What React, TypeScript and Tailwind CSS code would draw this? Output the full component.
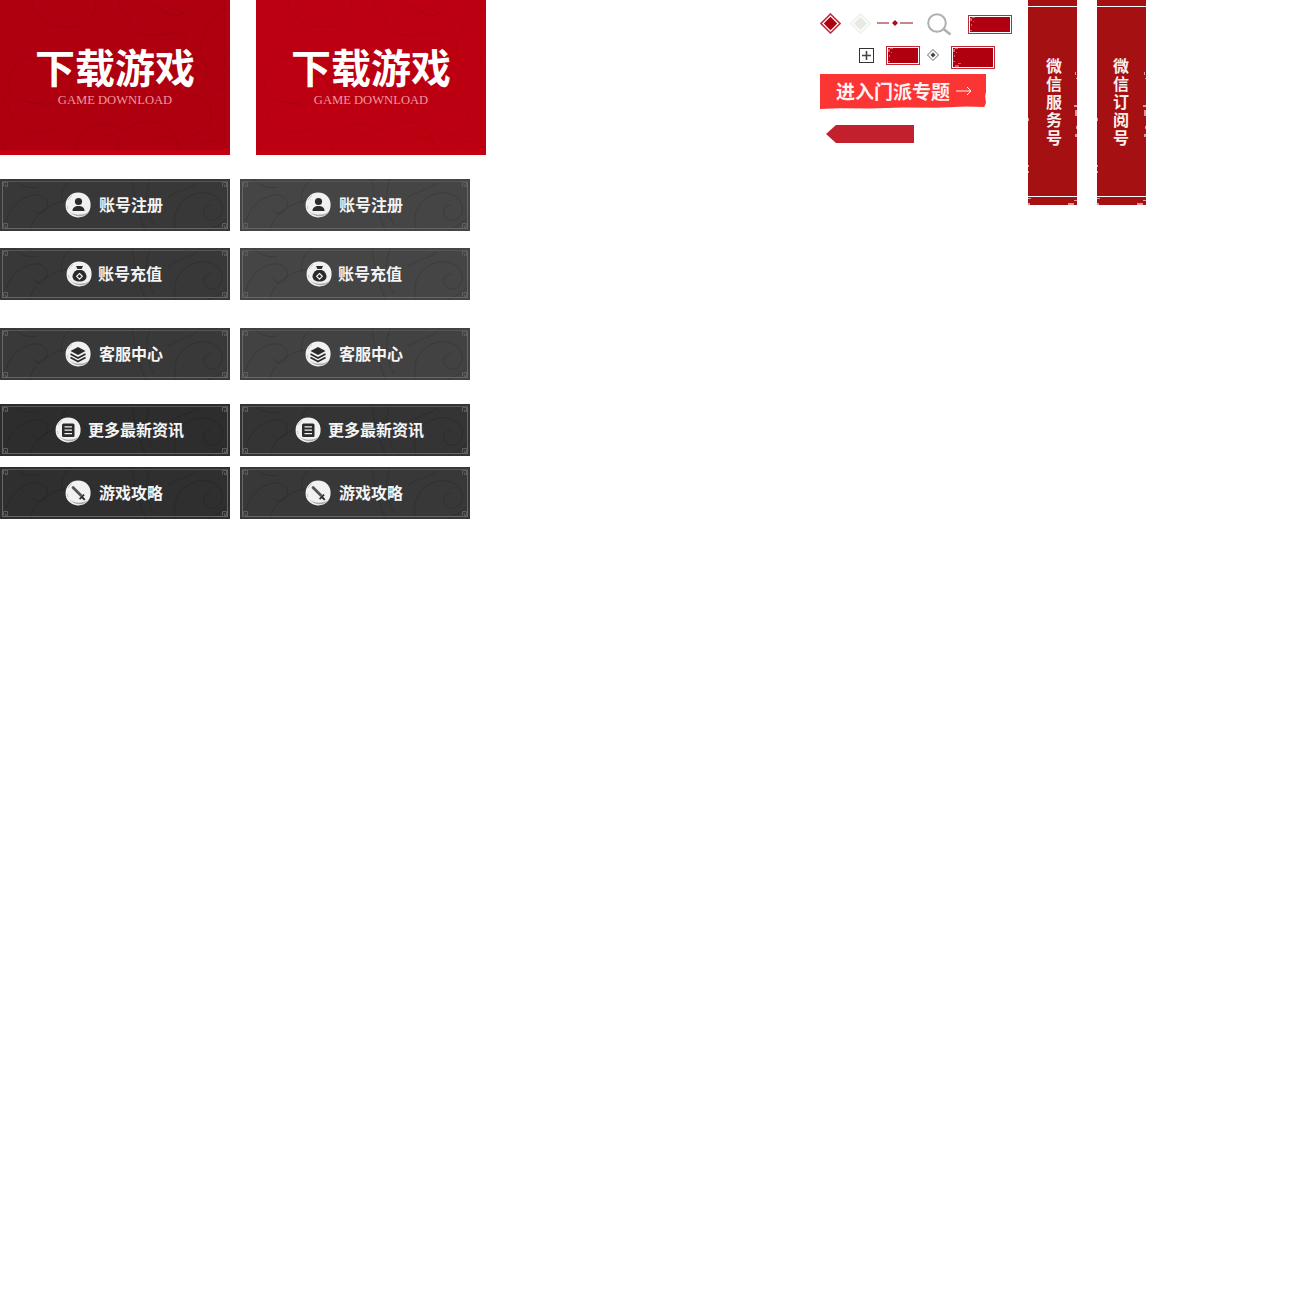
import type { ReactNode } from "react";

const cjk = "font-['Noto_Sans_CJK_SC','Noto_Sans_CJK_JP',sans-serif]";

// cloud swirls on the red banners
const Clouds = () => (
  <svg className="absolute inset-0" width="230" height="155" viewBox="0 0 230 155" fill="none" stroke="#000" strokeOpacity="0.07" strokeWidth="1">
    <path d="M32 0c2 14 14 26 34 27 18 1 30-8 30-27" />
    <path d="M118 0c2 10 8 12 12 22 5 12 18 16 34 12 14-3 26-1 20 12" />
    <path d="M148 6c8-3 14 6 22 8 10 3 20-2 22-10" />
    <path d="M164 10c6 8 16 8 20 2" />
    <path d="M230 8c-14 4-26 14-24 28-8 6-8 20 0 28-2 12 6 22 24 30" />
    <path d="M230 52c-6 4-8 14 0 20" />
    <path d="M10 92c-4-18 6-34 22-36 12-2 22 2 26 12 8 0 14 6 14 16-2 14-14 22-30 20-14-2-28-2-32-12z" />
    <path d="M0 92c10 12 8 28 22 36 14 8 28 4 34 0" />
    <path d="M24 98c8 8 20 6 24-2" />
    <path d="M76 155c-2-14 4-26 18-30 12-3 22 0 30 6 8-8 22-12 36-8 12 4 20 16 18 32" />
    <path d="M100 140c6-8 18-6 20 2 2 6-4 12-10 10" />
    <path d="M150 142c8-6 22-8 28 2" />
    <path d="M180 98c12-6 26-2 30 8 4 12-2 24-18 30" />
    <path d="M196 155c2-10 12-16 24-14" />
    <path d="M0 140l5 5v10" />
  </svg>
);

const DownloadBanner = ({ bg }: { bg: string }) => (
  <div className={`relative w-[230px] h-[155px] overflow-hidden ${bg}`}>
    <Clouds />
    <div className="absolute left-0 right-0 bottom-0 h-[5px] bg-[#c40012]" />
    <div className="relative flex flex-col items-center pt-[43px]">
      <div className={`${cjk} text-[40px] leading-[46px] font-bold text-white`}>下载游戏</div>
      <div className="font-['Liberation_Serif',serif] text-[12.600px] leading-[15px] mt-[4px] text-[#ee9aa2]">GAME DOWNLOAD</div>
    </div>
  </div>
);

// round brush-edged disc behind the button glyphs
const Disc = ({ children }: { children: ReactNode }) => (
  <svg width="26" height="26" viewBox="0 0 26 26" className="shrink-0 -mt-[1px]">
    <path d="M13 .6c4 0 7.4 1.4 9.6 3.8 2 2.2 3 5 3 8.4 0 3.8-1 6.600-3.200 9-2.400 2.400-5.800 3.800-9.600 3.600-3.600 0-6.800-1.400-9-3.800C1.600 19.400.4 16.400.6 12.800c0-3.400 1.200-6.200 3.400-8.400C6 2 9.400.6 13 .6z" fill="#f1f1f1" />
    <path d="M4 19c3 4 8 6 13 5 3-.6 5-2 6.400-4-2 1.400-4.400 2.400-7.400 2.600C11 23 7 22 4 19z" fill="#a8a8a8" />
    <path d="M3 8c1-2 2.500-3.500 4-4.500M2.500 14c0 1 .2 2 .6 3" stroke="#c4c4c4" strokeWidth="1" fill="none" />
    {children}
  </svg>
);

const PersonIcon = () => (
  <Disc>
    <circle cx="13.500" cy="9.500" r="3.600" fill="#2b2b2b" />
    <path d="M7.500 19c0-3.200 2.300-5 6-5s6 1.800 6 5z" fill="#2b2b2b" />
  </Disc>
);

const PouchIcon = () => (
  <Disc>
    <path d="M10 5h7l-1.400 3h-4.200z" fill="#2b2b2b" />
    <path d="M11 9h5c3 1.600 4.500 4 4.500 6.500 0 3-2.800 5-7 5s-7-2-7-5c0-2.500 1.500-4.900 4.500-6.500z" fill="#2b2b2b" />
    <path d="M13.500 12.500l2.800 2.800-2.800 2.800-2.800-2.800z" fill="none" stroke="#f1f1f1" strokeWidth="1.200" />
  </Disc>
);

const LayersIcon = () => (
  <Disc>
    <path d="M13 6l7.500 4-7.500 4-7.500-4z" fill="#2b2b2b" />
    <path d="M5.500 13l7.500 4 7.500-4M5.500 16.500l7.500 4 7.500-4" fill="none" stroke="#2b2b2b" strokeWidth="1.800" />
  </Disc>
);

const DocIcon = () => (
  <Disc>
    <rect x="7" y="6.500" width="12.500" height="13.500" rx="1.500" fill="#2b2b2b" />
    <path d="M9.500 9.800h7.500M9.500 13.200h7.500M9.500 16.600h7.500" stroke="#f1f1f1" strokeWidth="1.200" />
  </Disc>
);

const SwordIcon = () => (
  <Disc>
    <path d="M7 6.500l1.500-.5 9 9-2 2-9-9z" fill="#555" />
    <path d="M14 18.500l4.500-4.500 1.200 1.200-1.600 1.600 2.400 2.400-1.400 1.400-2.400-2.400-1.500 1.500z" fill="#2b2b2b" />
  </Disc>
);

const Corner = ({ className }: { className: string }) => (
  <svg width="5" height="5" viewBox="0 0 5 5" fill="none" stroke="#5e5e5e" className={`absolute ${className}`}>
    <path d="M.5 4.500v-4h4v4h-2v-2" />
  </svg>
);

// ink swirls on the dark buttons
const Swirls = () => (
  <svg className="absolute inset-0" width="230" height="52" viewBox="0 0 230 52" fill="none" stroke="#000" strokeOpacity="0.13" strokeWidth="1">
    <path d="M6 42c4-14 14-24 28-26 10-1 16 6 12 14-3 6-11 6-13 0" />
    <path d="M30 52c2-14 16-26 34-30 12-3 20-2 26 6" />
    <path d="M72 0c-8 6-12 14-10 24" />
    <path d="M14 0c6 8 16 10 24 8" />
    <path d="M132 0c2 18 6 34 14 52" />
    <path d="M150 0c-6 16-4 34 4 46" />
    <path d="M176 52c-4-16 2-30 16-36 12-5 26-2 30 10 3 10-6 18-14 14-7-4-5-14 3-14" />
    <path d="M168 18c10-6 20-8 30-14" />
    <path d="M208 52c8-4 16-8 22-16" />
  </svg>
);

type ButtonProps = { bg: string; text: string; icon: ReactNode; pad?: string };

const SpriteButton = ({ bg, text, icon, pad }: ButtonProps) => (
  <div className={`relative w-[230px] h-[52px] overflow-hidden ${bg}`}>
    <Swirls />
    <div className="absolute inset-x-[2px] top-[2px] bottom-[2px] border border-[#666] border-t-[#555]" />
    <Corner className="left-[3px] top-[3px]" />
    <Corner className="right-[3px] top-[3px]" />
    <Corner className="left-[3px] bottom-[3px]" />
    <Corner className="right-[3px] bottom-[3px]" />
    <div className={`relative h-full flex items-center ${pad ?? "pl-[65px] gap-[8px]"}`}>
      {icon}
      <span className={`${cjk} block text-[16px] leading-[20px] -mt-[2px] font-bold text-[#f4f4f4]`}>{text}</span>
    </div>
  </div>
);

const rows = [
  { text: "账号注册", icon: <PersonIcon />, left: "bg-[#383838]", right: "bg-[#454545]", mt: "mt-[24px]" },
  { text: "账号充值", icon: <PouchIcon />, left: "bg-[#383838]", right: "bg-[#454545]", mt: "mt-[17px]", pad: "pl-[66px] gap-[6px]" },
  { text: "客服中心", icon: <LayersIcon />, left: "bg-[#393939]", right: "bg-[#424242]", mt: "mt-[28px]" },
  { text: "更多最新资讯", icon: <DocIcon />, left: "bg-[#2d2d2d]", right: "bg-[#343434]", mt: "mt-[24px]", pad: "pl-[55px] gap-[7px]" },
  { text: "游戏攻略", icon: <SwordIcon />, left: "bg-[#2f2f2f]", right: "bg-[#383838]", mt: "mt-[11px]" },
];

// worn red stamp with a thin outline
const Stamp = ({ w, h, className }: { w: string; h: string; className?: string }) => (
  <div className={`${w} ${h} border border-[#bd2a38] p-[1px] bg-white ${className ?? ""}`}>
    <div className="relative w-full h-full bg-[#b0000f] overflow-hidden">
      <svg className="absolute left-0 top-0" width="14" height="24" viewBox="0 0 14 24" fill="#e9b9bd" fillOpacity="0.5">
        <rect x="0" y="1" width="2" height="3" />
        <rect x="2" y="0" width="3" height="1" />
        <rect x="1" y="7" width="1" height="2" />
        <rect x="3" y="4" width="1" height="1" />
        <rect x="0" y="13" width="2" height="1" />
        <rect x="5" y="15" width="3" height="1" />
        <rect x="2" y="17" width="4" height="2" />
      </svg>
    </div>
  </div>
);

const Diamond = ({ fill, edge }: { fill: string; edge: string }) => (
  <svg width="21" height="21" viewBox="0 0 21 21" className="shrink-0">
    <path d="M10.500 1L20 10.500 10.500 20 1 10.500z" fill="none" stroke={edge} strokeWidth="1.600" />
    <path d="M10.500 3.800l6.700 6.700-6.700 6.700-6.700-6.700z" fill={fill} />
  </svg>
);

const Strip = ({ text, left }: { text: string; left: string }) => (
  <div className="relative w-[49px] h-[205px] bg-[#a51012] overflow-hidden">
    <div className="absolute inset-x-0 top-[6px] h-[1px] bg-white" />
    <div className="absolute inset-x-0 top-[196px] h-[1px] bg-white" />
    <svg className="absolute inset-0" width="49" height="205" viewBox="0 0 49 205" fill="#f0d4d4" fillOpacity="0.7">
      <rect x="47" y="72" width="1" height="3" />
      <rect x="48" y="78" width="1" height="1" />
      <rect x="46" y="105" width="3" height="2" />
      <rect x="47" y="110" width="2" height="6" />
      <rect x="48" y="126" width="1" height="3" />
      <rect x="47" y="134" width="2" height="3" />
      <rect x="0" y="118" width="1" height="3" />
      <rect x="0" y="165" width="1" height="2" />
      <rect x="0" y="171" width="1" height="2" />
      <rect x="0" y="198" width="3" height="1" />
      <rect x="0" y="203" width="2" height="2" />
      <rect x="40" y="203" width="6" height="2" />
      <rect x="46" y="200" width="3" height="1" />
    </svg>
    <div className={`absolute ${left} top-[58px] [writing-mode:vertical-rl] ${cjk} text-[16px] leading-[16px] tracking-[2px] font-bold text-[#fbeeee]`}>
      {text}
    </div>
  </div>
);

const App = () => {
  return (
    <div className="w-[1290px] h-[1303px] bg-white overflow-hidden flex items-start">
      {/* left column: banners and buttons */}
      <div className="w-[486px] shrink-0">
        <div className="flex gap-[26px]">
          <DownloadBanner bg="bg-[#ae000f]" />
          <DownloadBanner bg="bg-[#bd0011]" />
        </div>
        {rows.map((r) => (
          <div key={r.text} className={`flex gap-[10px] ${r.mt}`}>
            <SpriteButton bg={r.left} text={r.text} icon={r.icon} pad={r.pad} />
            <SpriteButton bg={r.right} text={r.text} icon={r.icon} pad={r.pad} />
          </div>
        ))}
      </div>

      {/* small pieces */}
      <div className="ml-[334px] w-[208px] shrink-0 pt-[13px]">
        <div className="flex items-start h-[33px]">
          <Diamond fill="#b0000f" edge="#c0303e" />
          <div className="ml-[9px]">
            <Diamond fill="#e8e8e5" edge="#efefec" />
          </div>
          <svg width="36" height="20" viewBox="0 0 36 20" className="ml-[6px]">
            <path d="M0 10h12M23 10h13" stroke="#8c1016" strokeWidth="1" />
            <path d="M18 7l3 3-3 3-3-3z" fill="#a5101a" />
          </svg>
          <svg width="26" height="23" viewBox="0 0 26 23" fill="none" stroke="#b0b0b0" className="ml-[13px]">
            <circle cx="11" cy="10" r="8.800" strokeWidth="2" />
            <path d="M17.500 16l7 5.500" strokeWidth="2.600" />
          </svg>
          <Stamp w="w-[44px]" h="h-[19px]" className="ml-[16px] mt-[2px]" />
        </div>
        <div className="flex items-start h-[28px]">
          <div className="ml-[39px] mt-[2px] w-[15px] h-[15px] border border-[#333] flex items-center justify-center">
            <svg width="9" height="9" viewBox="0 0 9 9">
              <path d="M4.500 0v9M0 4.500h9" stroke="#444" strokeWidth="1.600" />
            </svg>
          </div>
          <Stamp w="w-[34px]" h="h-[19px]" className="ml-[12px]" />
          <svg width="12" height="12" viewBox="0 0 12 12" className="ml-[7px] mt-[3px]">
            <path d="M6 .5L11.500 6 6 11.500.5 6z" fill="none" stroke="#666" />
            <path d="M6 3.500L8.500 6 6 8.500 3.500 6z" fill="#444" />
          </svg>
          <Stamp w="w-[44px]" h="h-[23px]" className="ml-[12px]" />
        </div>
        <div className="w-[166px] h-[36px] bg-[#fb3434] flex items-center pl-[16px] pb-[3px] [clip-path:polygon(0_0,100%_0,100%_50%,99.500%_62%,100%_80%,99%_92%,88%_90%,70%_94%,50%_93%,30%_96%,12%_95%,0_97%)]">
          <span className={`${cjk} block text-[19px] leading-[24px] font-bold text-[#fff3f0]`}>进入门派专题</span>
          <svg width="16" height="10" viewBox="0 0 16 10" fill="none" stroke="#fff3f0" className="ml-[6px]">
            <path d="M0 5h15M11 1l4 4-4 4" />
          </svg>
        </div>
        <div className="w-[88px] h-[18px] ml-[6px] mt-[15px] bg-[#c3202e] [clip-path:polygon(10px_0,100%_0,100%_100%,10px_100%,0_50%)]" />
      </div>

      {/* vertical strips */}
      <div className="flex gap-[20px] shrink-0">
        <Strip text="微信服务号" left="left-[18px]" />
        <Strip text="微信订阅号" left="left-[16px]" />
      </div>
    </div>
  );
};

export default App;
